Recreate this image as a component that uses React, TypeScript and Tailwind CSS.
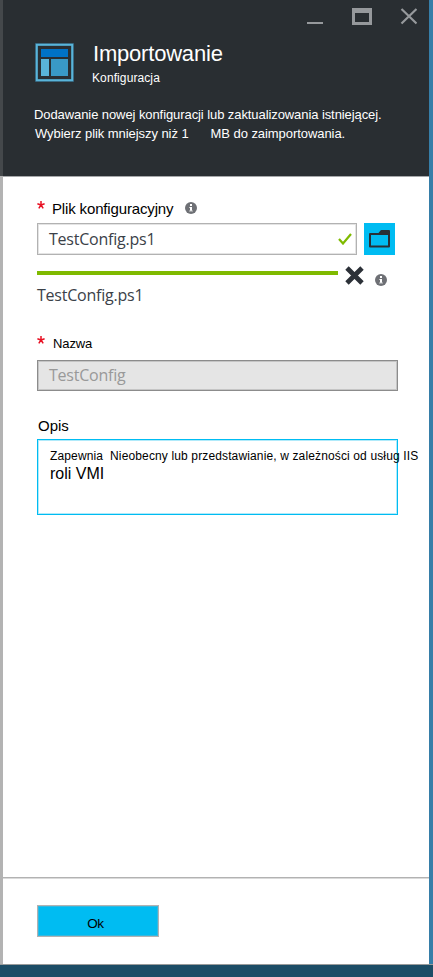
import React from "react";

function InfoIcon({ className = "" }: { className?: string }) {
  return (
    <svg className={`size-3 shrink-0 ${className}`} viewBox="0 0 12 12" aria-hidden="true">
      <circle cx="6" cy="6" r="6" fill="#6e7075" />
      <path d="M5 2h2v2H5zM5 5h2v4H5z" fill="#fff" />
      <path d="M4 5h1v1H4zM4 8.500h4V9.500H4z" fill="#c8c9cb" />
    </svg>
  );
}

function Required() {
  return (
    <svg className="size-2 shrink-0" viewBox="0 0 8 8" aria-hidden="true">
      <path d="M4 4V0M4 4L.4 2.800M4 4l3.600-1.200M4 4L1.800 7.400M4 4l2.200 3.400" stroke="#e81123" strokeWidth="1.5" fill="none" />
    </svg>
  );
}

function TemplateIcon() {
  return (
    <svg className="size-[39px] shrink-0" viewBox="0 0 39 39" aria-hidden="true">
      <rect x="1.5" y="1.5" width="36" height="36" fill="none" stroke="#2f5568" strokeWidth="3" />
      <rect x="1.75" y="1.75" width="35.5" height="35.5" fill="none" stroke="#59b4d9" strokeWidth="2" />
      <path d="M6 6h27v8H6z" fill="#0072c6" />
      <path d="M6 16h8v17H6z" fill="#59b4d9" />
      <path d="M16 16h17v17H16z" fill="#3999c6" />
    </svg>
  );
}

function WindowControls() {
  return (
    <div className="flex h-[43px] shrink-0 justify-end pr-3 pt-[7px]">
      <svg className="h-5 w-[111px]" viewBox="0 0 111 20" aria-label="Minimalizuj, maksymalizuj, zamknij">
        <path d="M1 15h16v2H1z" fill="#96999c" />
        <path d="M46 1h20v17H46zM49 6v9h14V6z" fill="#96999c" fillRule="evenodd" />
        <path d="M95.5 2l15 14.5M110.500 2l-15 14.500" stroke="#96999c" strokeWidth="2.2" />
      </svg>
    </div>
  );
}

export default function App() {
  return (
    <div className="flex h-[977px] w-[433px] flex-col overflow-hidden bg-[#1c4d66] font-['Liberation_Sans',Arial,sans-serif] text-black">
      <div className="flex h-[965px] border-b border-[#999b9b]">
        <div className="flex w-[3px] shrink-0 flex-col bg-[#b3b3b3]">
          <div className="h-[176px] bg-[#44484b]" />
        </div>
        <main className="flex w-[426px] shrink-0 flex-col bg-white">
          <header className="flex h-[177px] shrink-0 flex-col border-b border-[#a6a8aa] bg-[#292e32] text-white">
            <WindowControls />
            <div className="flex h-[62px] gap-[18px] pl-8">
              <TemplateIcon />
              <div className="whitespace-nowrap">
                <h1 className="h-[26px] pl-px text-[22px] leading-[22px] tracking-[-0.2px]">Importowanie</h1>
                <p className="text-[12px] leading-[18px] tracking-[0.1px]">Konfiguracja</p>
              </div>
            </div>
            <div className="whitespace-pre pl-[31px] text-[13px] leading-[19px]">
              <p className="tracking-[-0.083px]">Dodawanie nowej konfiguracji lub zaktualizowania istniejącej.</p>
              <p className="pl-px tracking-[-0.06px]">Wybierz plik mniejszy niż 1<span className="inline-block w-[22px]"> </span>MB do zaimportowania.</p>
            </div>
          </header>

          <section className="flex h-[700px] shrink-0 flex-col pl-[34px] pt-[22px]">
            <div className="flex h-6 items-start">
              <div className="pt-0.5"><Required /></div>
              <label className="ml-[7px] w-[133px] whitespace-nowrap text-[15px] leading-5 tracking-[-0.15px]">Plik konfiguracyjny</label>
              <InfoIcon className="mt-[3px]" />
            </div>
            <div className="flex h-8 gap-[7px]">
              <div className="flex w-[320px] items-center justify-between border border-[#b2b2b2] pl-[11px] pr-[4px] font-['Open_Sans',sans-serif] text-[16px] text-[#3b4148] shadow-[inset_0_0_0_1px_#e4e4e4]">
                <span className="leading-[30px] tracking-[-0.22px]">TestConfig.ps1</span>
                <svg className="h-3 w-[14px]" viewBox="0 0 14 12" aria-hidden="true"><path d="M1 6l4 4.5L13 1" fill="none" stroke="#7fba00" strokeWidth="2.2" /></svg>
              </div>
              <button className="flex w-[31px] items-center justify-center bg-[#00bcf2]" aria-label="Wybierz plik">
                <svg className="h-[18px] w-[21px]" viewBox="0 0 21 18" aria-hidden="true">
                  <path d="M1 4h9l2.500-3h7.500v15.500H1z" fill="none" stroke="#293036" strokeWidth="2" strokeLinejoin="round" />
                  <path d="M10 4l2.500-3H20v4H10z" fill="#293036" />
                </svg>
              </button>
            </div>
            <div className="flex h-[31px] items-start pt-2.5">
              <div className="mt-1.5 h-1 w-[301px] bg-[#7fba00]" />
              <svg className="ml-[7px] mt-px size-[19px]" viewBox="0 0 19 19" aria-hidden="true"><path d="M2 2l15 15M17 2L2 17" stroke="#2c3138" strokeWidth="4.800" /></svg>
              <InfoIcon className="ml-[11px] mt-[9px]" />
            </div>
            <p className="h-[50px] font-['Open_Sans',sans-serif] text-[16px] leading-[19px] tracking-[-0.22px] text-[#3b4148]">TestConfig.ps1</p>
            <div className="flex h-[24px]">
              <Required />
              <label className="ml-2 text-[13px] leading-[15px] tracking-[-0.1px]">Nazwa</label>
            </div>
            <div className="h-[31px] w-[361px] border border-[#8c8c8c] bg-[#e5e5e5] pl-[11px] font-['Open_Sans',sans-serif] text-[16px] leading-[29px] tracking-[-0.22px] text-[#999] shadow-[inset_0_0_0_1px_#c5c5c5]">TestConfig</div>
            <label className="mt-[26px] h-[22px] pl-px text-[15px] leading-[18px]">Opis</label>
            <div className="h-[76px] w-[361px] whitespace-pre border border-[#00bcf2] pl-3 pt-2 shadow-[inset_0_0_0_1px_#b0eafa]">
              <p className="text-[12px] leading-[17px] tracking-[0.135px]">Zapewnia  Nieobecny lub przedstawianie, w zależności od usług IIS</p>
              <p className="text-[16px] leading-[18px]">roli VMI</p>
            </div>
          </section>

          <footer className="h-[87px] shrink-0 border-t border-[#b2b2b2] pl-[34px] pt-[27px] shadow-[inset_0_1px_0_#dadada]">
            <button className="block h-8 w-[122px] border border-[#b2b2b2] bg-[#00bcf2] pr-[5px] pt-[5px] text-[13.500px] leading-[26px] tracking-[-0.3px] shadow-[inset_0_0_0_1px_#35b8df]">Ok</button>
          </footer>
        </main>
        <div className="w-1 shrink-0 bg-[#367ea8]" />
      </div>
    </div>
  );
}
